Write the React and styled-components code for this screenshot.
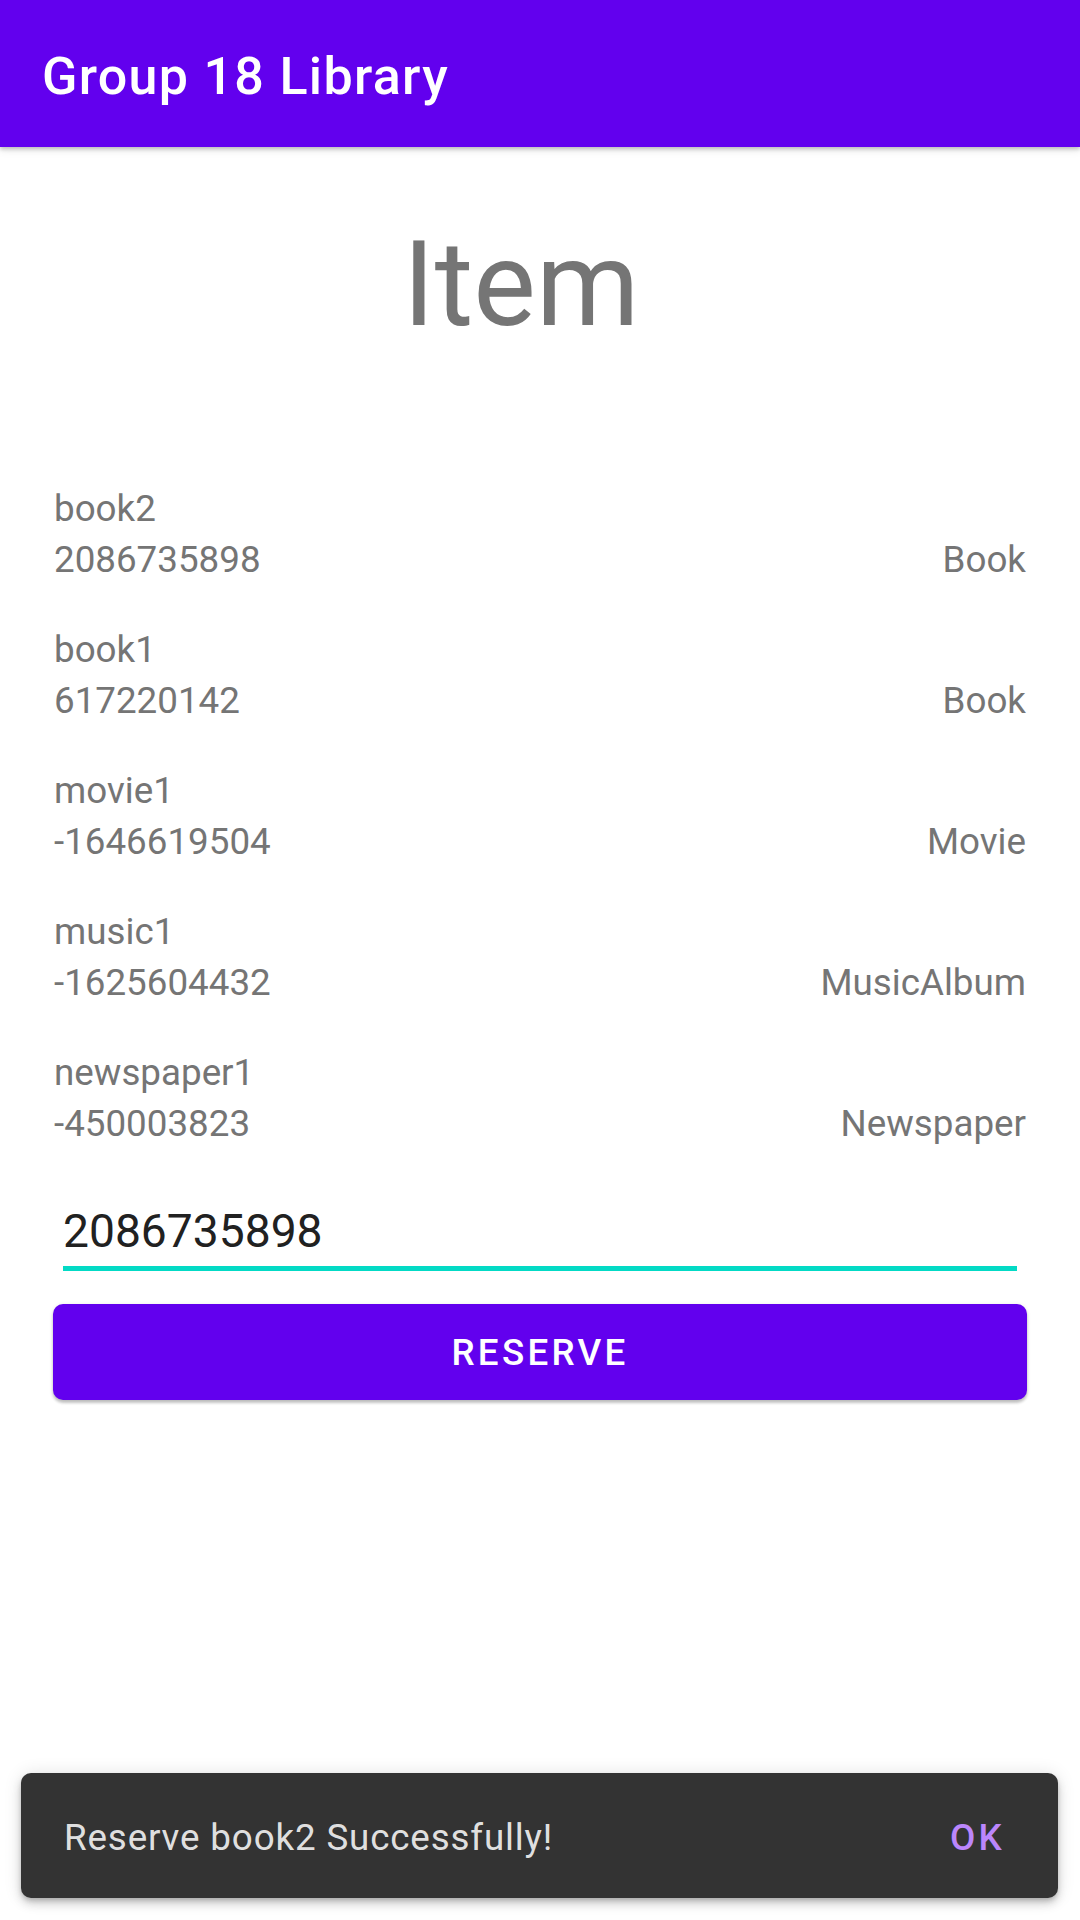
import React from "react";
import styled, { createGlobalStyle } from "styled-components";

const Global = createGlobalStyle`
  html, body { margin: 0; padding: 0; background: #ffffff; }
  body { font-family: Roboto, "Noto Sans", "Liberation Sans", sans-serif; }
  #root { min-height: 1920px; }
`;

const Screen = styled.div`
  position: relative;
  width: 1080px;
  height: 1920px;
  overflow: hidden;
  background: #ffffff;
  display: flex;
  flex-direction: column;
`;

const AppBar = styled.header`
  height: 147px;
  box-sizing: border-box;
  padding: 46px 42px 0;
  background: #6200ee;
  box-shadow: 0 2px 4px rgba(0, 0, 0, 0.22), 0 4px 8px rgba(0, 0, 0, 0.08);
  position: relative;
  z-index: 1;
`;

const AppTitle = styled.h1`
  margin: 0;
  font-size: 52px;
  line-height: 62px;
  font-weight: 500;
  letter-spacing: 1.3px;
  color: #ffffff;
`;

const PageTitle = styled.h2`
  margin: 69px 0 0;
  padding-right: 38px;
  text-align: center;
  font-size: 118px;
  line-height: 138px;
  font-weight: 400;
  color: #757575;
`;

const List = styled.ul`
  list-style: none;
  margin: 129px 0 0;
  padding: 0 54px;
  display: flex;
  flex-direction: column;
  gap: 39px;
`;

const Row = styled.li`
  display: flex;
  justify-content: space-between;
  align-items: flex-end;
`;

const Info = styled.div`
  display: flex;
  flex-direction: column;
`;

const Line = styled.span`
  font-size: 36.75px;
  line-height: 51px;
  color: #757575;
  white-space: nowrap;
`;

const Field = styled.div`
  margin: 54px 63px 0;
  padding-bottom: 7px;
  border-bottom: 5px solid #03dac5;
`;

const Input = styled.input`
  display: block;
  width: 100%;
  box-sizing: border-box;
  border: none;
  outline: none;
  padding: 0;
  margin: 0;
  background: transparent;
  font-family: Roboto, "Noto Sans", "Liberation Sans", sans-serif;
  font-size: 46.2px;
  line-height: 56px;
  height: 56px;
  color: #212121;
`;

const Button = styled.button`
  margin: 33px 53px 0;
  height: 96px;
  border: none;
  border-radius: 10px;
  background: #6200ee;
  color: #ffffff;
  font-family: Roboto, "Noto Sans", "Liberation Sans", sans-serif;
  font-size: 36.75px;
  font-weight: 500;
  letter-spacing: 0.0892em;
  text-transform: uppercase;
  box-shadow: 0 3px 3px rgba(0, 0, 0, 0.2), 0 1px 4px rgba(0, 0, 0, 0.12);
`;

const Snackbar = styled.div`
  position: absolute;
  left: 21px;
  right: 22px;
  top: 1773px;
  height: 125px;
  box-sizing: border-box;
  padding: 0 53px 0 43px;
  border-radius: 10px;
  background: #333333;
  display: flex;
  align-items: center;
  justify-content: space-between;
  box-shadow: 0 3px 5px -1px rgba(0, 0, 0, 0.2), 0 6px 10px rgba(0, 0, 0, 0.14),
    0 1px 18px rgba(0, 0, 0, 0.12);
`;

const SnackText = styled.span`
  font-size: 36.75px;
  letter-spacing: 0.85px;
  color: rgba(255, 255, 255, 0.87);
  padding-top: 4px;
`;

const SnackAction = styled.span`
  font-size: 36.75px;
  font-weight: 500;
  letter-spacing: 0.0892em;
  color: #bb86fc;
  padding-top: 4px;
`;

const items = [
  { name: "book2", id: "2086735898", type: "Book" },
  { name: "book1", id: "617220142", type: "Book" },
  { name: "movie1", id: "-1646619504", type: "Movie" },
  { name: "music1", id: "-1625604432", type: "MusicAlbum" },
  { name: "newspaper1", id: "-450003823", type: "Newspaper" },
];

export default function App() {
  return (
    <>
      <Global />
      <Screen>
        <AppBar>
          <AppTitle>Group 18 Library</AppTitle>
        </AppBar>
        <PageTitle>Item</PageTitle>
        <List>
          {items.map((it) => (
            <Row key={it.name}>
              <Info>
                <Line>{it.name}</Line>
                <Line>{it.id}</Line>
              </Info>
              <Line>{it.type}</Line>
            </Row>
          ))}
        </List>
        <Field>
          <Input defaultValue="2086735898" />
        </Field>
        <Button>Reserve</Button>
        <Snackbar>
          <SnackText>Reserve book2 Successfully!</SnackText>
          <SnackAction>OK</SnackAction>
        </Snackbar>
      </Screen>
    </>
  );
}
